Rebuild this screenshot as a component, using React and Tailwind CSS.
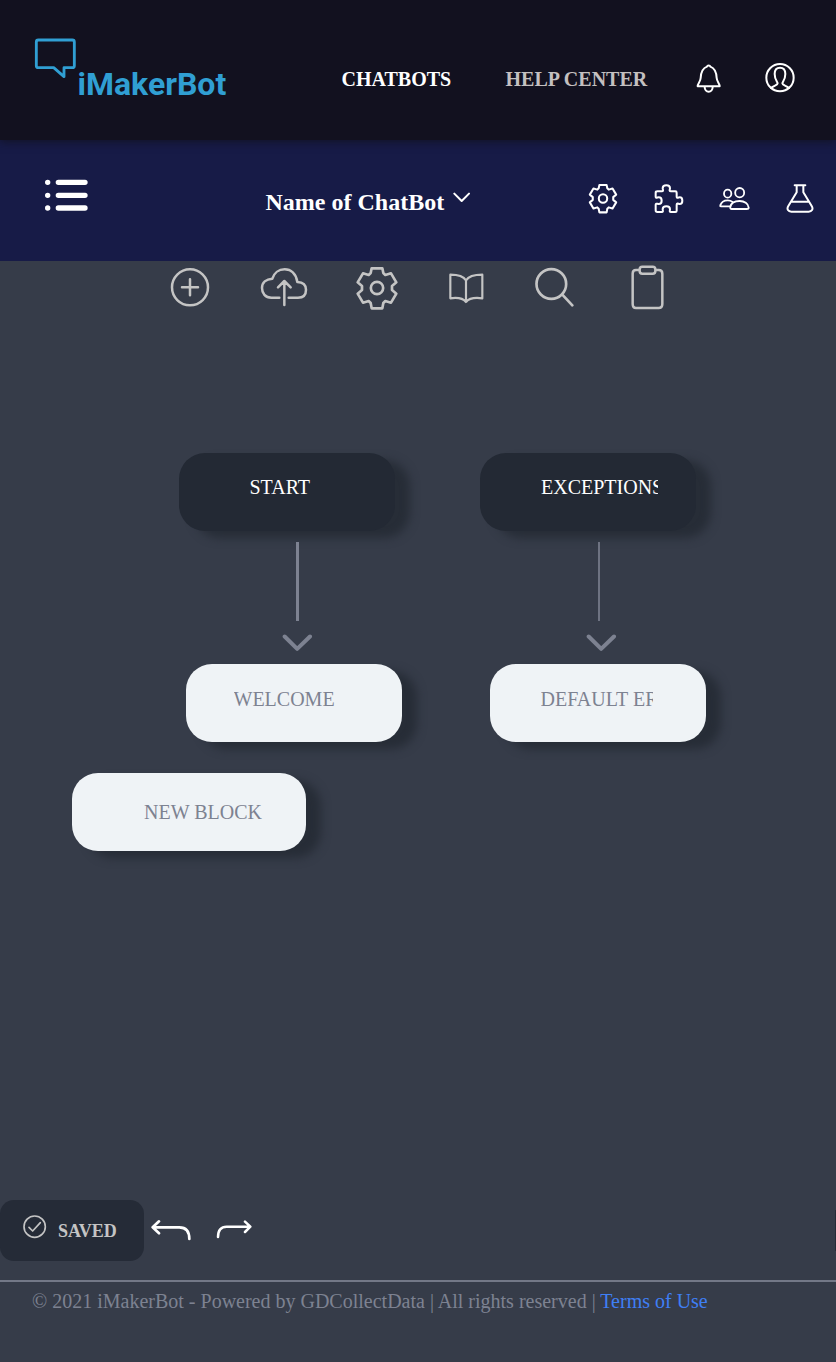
import React from "react";

function Icon({ box, className, stroke = 6, children }) {
  return (
    <svg
      viewBox={box}
      className={"shrink-0 " + className}
      fill="none"
      stroke="currentColor"
      strokeWidth={stroke}
      strokeLinecap="round"
      strokeLinejoin="round"
      aria-hidden="true"
    >
      {children}
    </svg>
  );
}

function Gear({ className, stroke = 8 }) {
  return (
    <Icon box="-66 -66 132 132" className={className} stroke={stroke}>
      <path d="M-16 -59H16L19 -45L25 -39L42 -44L58 -17L45 -6V6L58 17L42 44L25 39L19 45L16 61H-16L-19 45L-25 39L-42 44L-58 17L-45 6V-6L-58 -17L-42 -44L-25 -39L-19 -45Z" />
      <circle r="18.5" />
    </Icon>
  );
}

function Header() {
  return (
    <header className="relative z-10 flex h-[140px] items-start bg-[#12111f] shadow-[0_2px_8px_rgba(18,17,31,0.8)]">
      <a className="ml-[34px] mt-[38px] flex w-[194px] items-start text-[#309fd3]">
        <Icon box="42 54 129 123" className="h-[41px] w-[43px]" stroke={8.5}>
          <path d="M101 143H55Q49 143 49 137V66Q49 60 55 60H157Q163 60 163 66V137Q163 143 157 143H132V170Z" />
        </Icon>
        <span className="ml-[0.500px] mt-[27px] whitespace-nowrap font-['Roboto'] text-[32px] leading-[38px] font-bold">iMakerBot</span>
      </a>
      <nav className="flex text-[20px] leading-[24px] font-bold">
        <a className="ml-[113.500px] mt-[67px] w-[111px] text-white">CHATBOTS</a>
        <a className="ml-[53px] mt-[67px] w-[143px] whitespace-nowrap text-[#c4c0c0]">HELP CENTER</a>
      </nav>
      <Icon box="1095 39 84 93" className="ml-[46.500px] mt-[63px] h-[31px] w-[28px] text-white">
        <path d="M1103 109C1103 100 1111 96 1112 84C1113 62 1120 54 1131 50C1132 45 1140 45 1141 50C1152 54 1159 62 1160 84C1161 96 1169 100 1169 109Z" />
        <path d="M1124 111a12 14 0 0 0 24 0" />
      </Icon>
      <Icon box="1305 36 90 93" className="ml-[42px] mt-[62px] h-[31px] w-[30px] text-white">
        <circle cx="1350" cy="83" r="41" />
        <path d="M1323 114C1332 106 1343 106 1343 100C1343 95 1334 90 1334 72C1334 58 1340 53 1350 53C1360 53 1366 58 1366 72C1366 90 1357 95 1357 100C1357 106 1368 106 1377 114" />
      </Icon>
    </header>
  );
}

function BotBar() {
  return (
    <div className="flex h-[121px] items-start bg-[#171b47] text-white">
      <Icon box="75 57 129 96" className="ml-[45px] mt-[39px] h-[32px] w-[43px]" stroke={16}>
        <path d="M83 67h.1M83 106h.1M83 144h.1M115 67H195M115 106H195M115 144H195" />
      </Icon>
      <h1 className="ml-[177.500px] mt-[48px] w-[179.500px] whitespace-nowrap text-[24px] leading-[28px] font-bold">Name of ChatBot</h1>
      <Icon box="609 66 54 33" className="ml-[8px] mt-[52px] h-[11px] w-[18px]" stroke={6}>
        <path d="M613 71L635 93L657 71" />
      </Icon>
      <Gear className="ml-[117px] mt-[43px] h-[31px] w-[30px]" stroke={9} />
      <Icon box="249 39 93 93" className="ml-[34.500px] mt-[43px] h-[31px] w-[31px]">
        <path d="M262 64H275C282 64 278 58 278 55C278 49 283 46 289 46C295 46 300 49 300 55C300 58 296 64 303 64H316Q320 64 320 68V80C320 86 326 82 329 82C334 82 337 86 337 92C337 98 334 102 329 102C326 102 320 97 320 104V122Q320 126 316 126H303C297 126 300 121 300 118C300 112 295 109 289 109C283 109 278 112 278 118C278 121 281 126 275 126H262Q257 126 257 121V104C257 99 262 102 266 102C271 102 275 98 275 92C275 86 271 82 266 82C262 82 257 86 257 80V68Q257 64 262 64Z" />
      </Icon>
      <Icon box="444 48 99 75" className="ml-[34.500px] mt-[46px] h-[25px] w-[33px]" stroke={5.5}>
        <ellipse cx="473" cy="71" rx="11" ry="12" />
        <ellipse cx="509" cy="68" rx="13.500" ry="14" />
        <path d="M481 111C483 99 495 93 509 93C523 93 535 101 536 113Q536 117 530 117H485Q480 117 481 111ZM488 96C484 93 479 91 473 91C463 91 454 96 451 106Q449 109 453 109H479" />
      </Icon>
      <Icon box="648 39 84 93" className="ml-[35px] mt-[43px] h-[31px] w-[28px]">
        <path d="M674 46H706M680 46V67L655 108C649 118 655 125 664 125H716C725 125 731 118 725 108L700 67V46M667 95H713" />
      </Icon>
    </div>
  );
}

function Toolbar() {
  return (
    <div className="flex h-[52px] items-start text-[#c4c4c4]">
      <Icon box="60 51 120 120" className="ml-[170px] mt-[6px] size-[40px]" stroke={7.5}>
        <circle cx="120" cy="112" r="54" />
        <path d="M96 112H144M120 88V136" />
      </Icon>
      <Icon box="330 51 144 120" className="ml-[50px] mt-[6px] h-[40px] w-[48px]" stroke={7.5}>
        <path d="M388 143H364C346 143 336 130 336 114C336 98 348 87 367 86C372 69 386 58 404 58C422 58 438 70 442 96C458 97 468 104 468 119C468 134 460 143 444 143H416M403 165V94M384 112L403 93L422 112" />
      </Icon>
      <Gear className="ml-[47px] mt-[4.500px] size-[44px]" />
      <Icon box="84 66 111 96" className="ml-[49px] mt-[11px] h-[32px] w-[37px]" stroke={6.5}>
        <path d="M138 91C130 78 112 74 91 74V145C112 142 130 146 138 156C146 146 165 142 187 145V74C165 74 146 78 138 91V156" />
      </Icon>
      <Icon box="345 51 117 120" className="ml-[50px] mt-[6px] h-[40px] w-[39px]" stroke={8}>
        <circle cx="394" cy="102" r="44.500" />
        <path d="M427 134L457 166" />
      </Icon>
      <Icon box="630 42 105 141" className="ml-[56px] mt-[3px] h-[47px] w-[35px]" stroke={7.5}>
        <path d="M657 60H648Q638 60 638 71V162Q638 174 648 174H716Q727 174 727 162V71Q727 60 716 60H708" />
        <rect x="659" y="50" width="47" height="21" rx="8" />
      </Icon>
    </div>
  );
}

function Block({ label, className, labelClass }) {
  return (
    <div className={"absolute h-[78px] rounded-[26px] shadow-[15px_7px_10px_#272d37] " + className}>
      <div className={"overflow-hidden whitespace-nowrap text-[20px] leading-[24px] " + labelClass}>{label}</div>
    </div>
  );
}

function ArrowHead({ className }) {
  return (
    <Icon box="366 582 93 54" className={"absolute h-[18px] w-[31px] text-[#7d8291] " + className} stroke={12}>
      <path d="M374 589.500L411.500 626.500L450 589.500" />
    </Icon>
  );
}

function FlowCanvas() {
  return (
    <main className="relative h-[887px]">
      <Block label="START" className="left-[179px] top-[140px] w-[216px] bg-[#232934] text-white" labelClass="ml-[70.500px] mt-[22px] w-[117px]" />
      <Block label="EXCEPTIONS" className="left-[480px] top-[140px] w-[216px] bg-[#232934] text-white" labelClass="ml-[61px] mt-[22px] w-[117px]" />
      <div className="absolute left-[296px] top-[229px] h-[79px] w-[3px] bg-[#7d8291]" />
      <div className="absolute left-[598px] top-[229px] h-[79px] w-[2px] bg-[#6e7382]" />
      <ArrowHead className="left-[282px] top-[321px]" />
      <ArrowHead className="left-[586px] top-[321px]" />
      <Block label="WELCOME" className="left-[185.500px] top-[351px] w-[216px] bg-[#eff3f6] text-[#7d8291]" labelClass="ml-[48px] mt-[23px] w-[117px]" />
      <Block label="DEFAULT ERROR" className="left-[489.500px] top-[351px] w-[216px] bg-[#eff3f6] text-[#7d8291]" labelClass="ml-[51px] mt-[23px] w-[112px]" />
      <Block label="NEW BLOCK" className="left-[72px] top-[460px] w-[233.500px] bg-[#eff3f6] text-[#7d8291]" labelClass="ml-[72px] mt-[27px] w-[130px]" />
    </main>
  );
}

function StatusBar() {
  return (
    <div className="flex h-[80px] items-start">
      <div className="flex h-[61px] w-[144px] items-start rounded-[14px] bg-[#252b37] text-[#c4c4c4]">
        <Icon box="66 72 75 75" className="ml-[22px] mt-[14px] size-[25px]" stroke={5}>
          <circle cx="104" cy="110" r="32" />
          <path d="M87 112L98 123L121 98" />
        </Icon>
        <span className="ml-[11px] mt-[20px] text-[18px] leading-[22px] font-bold">SAVED</span>
      </div>
      <Icon box="453 87 123 66" className="ml-[7px] mt-[19px] h-[22px] w-[41px] text-white" stroke={8}>
        <path d="M477 94L458 112L477 130M460 112H538Q568 112 568 147" />
      </Icon>
      <Icon box="648 87 108 60" className="ml-[24px] mt-[19px] h-[20px] w-[36px] text-white" stroke={7.5}>
        <path d="M735 95L751 110L735 126M750 110H680Q654 110 654 141" />
      </Icon>
      <div className="ml-auto mt-[10px] h-[41px] w-px bg-[#252b37]" />
    </div>
  );
}

export default function App() {
  return (
    <div className="flex h-[1362px] w-[836px] flex-col overflow-hidden bg-[#363c49] font-['Liberation_Serif',serif]">
      <Header />
      <BotBar />
      <Toolbar />
      <FlowCanvas />
      <StatusBar />
      <footer className="h-[82px] border-t-2 border-[#737887] bg-[#363c49] pl-[32px] pt-[7px] text-[20px] leading-[24px] whitespace-nowrap text-[#7d8291]">
        © 2021 iMakerBot - Powered by GDCollectData | All rights reserved | <a className="text-[#3f7ff5]">Terms of Use</a>
      </footer>
    </div>
  );
}
